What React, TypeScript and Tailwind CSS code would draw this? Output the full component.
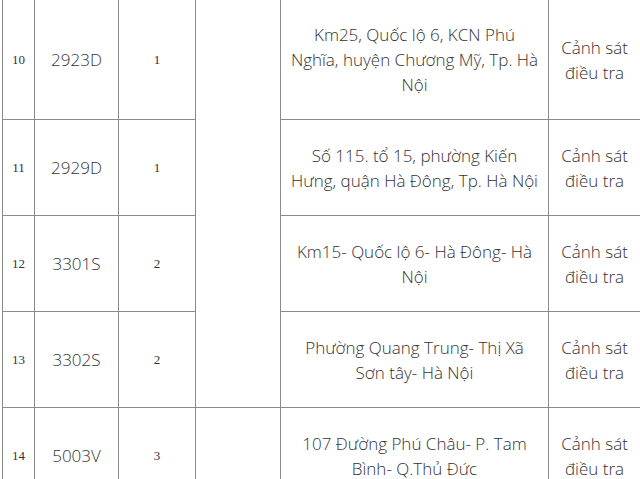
const rows = [
  { stt: "10", code: "2923D", qty: "1", addr: ["Km25, Quốc lộ 6, KCN Phú", "Nghĩa, huyện Chương Mỹ, Tp. Hà", "Nội"], h: "h-[120px]" },
  { stt: "11", code: "2929D", qty: "1", addr: ["Số 115. tổ 15, phường Kiến", "Hưng, quận Hà Đông, Tp. Hà Nội"], h: "h-[96px]" },
  { stt: "12", code: "3301S", qty: "2", addr: ["Km15- Quốc lộ 6- Hà Đông- Hà", "Nội"], h: "h-[96px]" },
  { stt: "13", code: "3302S", qty: "2", addr: ["Phường Quang Trung- Thị Xã", "Sơn tây- Hà Nội"], h: "h-[96px]" },
  { stt: "14", code: "5003V", qty: "3", addr: ["107 Đường Phú Châu- P. Tam", "Bình- Q.Thủ Đức"], h: "h-[96px]" },
];

const cell = "border border-[#8a8a8a] text-center align-middle";

export default function App() {
  return (
    <div className="h-[479px] w-[640px] overflow-hidden bg-white">
      <table
        className="ml-[2px] mt-[-1px] table-fixed border-collapse text-[#333] font-light w-[638px]"
        style={{ fontFamily: '"Open Sans", "Noto Sans", sans-serif' }}
      >
        <colgroup>
          <col className="w-[32px]" />
          <col className="w-[84px]" />
          <col className="w-[77px]" />
          <col className="w-[85px]" />
          <col className="w-[268px]" />
          <col className="w-[92px]" />
        </colgroup>
        <tbody>
          {rows.map((r, i) => (
            <tr key={r.stt} className={r.h}>
              <td className={`${cell} text-[13px] font-['Liberation_Serif',serif]`}>{r.stt}</td>
              <td className={`${cell} text-[17px]`}>{r.code}</td>
              <td className={`${cell} text-[13px] font-['Liberation_Serif',serif]`}>{r.qty}</td>
              {i === 0 && <td rowSpan={4} className={cell}></td>}
              {i === 4 && <td className={cell}></td>}
              <td className={`${cell} whitespace-nowrap text-[17px] leading-[25px]`}>
                {r.addr.map((l) => (
                  <div key={l}>{l}</div>
                ))}
              </td>
              <td className={`${cell} text-[17px] leading-[25px]`}>
                <div>Cảnh sát</div>
                <div>điều tra</div>
              </td>
            </tr>
          ))}
        </tbody>
      </table>
    </div>
  );
}
